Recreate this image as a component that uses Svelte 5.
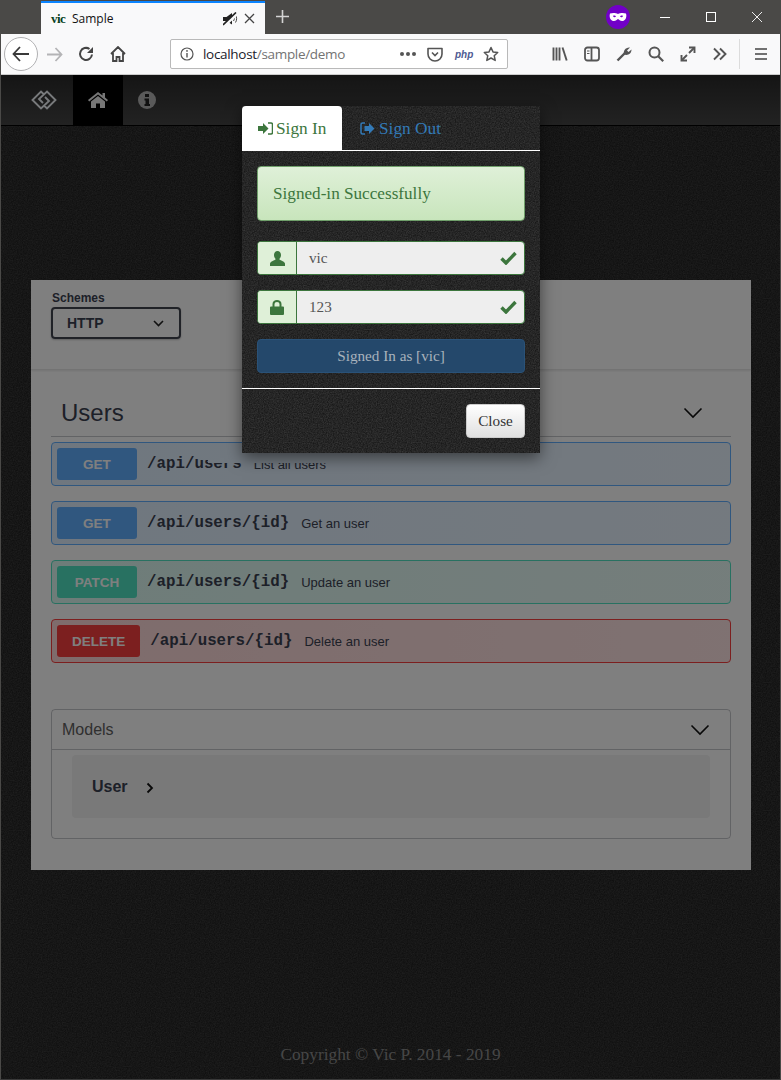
<script>
  const ops = [
    { m: 'GET', cls: 'get', path: '/api/users', desc: 'List all users', cut: true },
    { m: 'GET', cls: 'get', path: '/api/users/{id}', desc: 'Get an user' },
    { m: 'PATCH', cls: 'patch', path: '/api/users/{id}', desc: 'Update an user' },
    { m: 'DELETE', cls: 'delete', path: '/api/users/{id}', desc: 'Delete an user' }
  ];
</script>

<div class="window">
  <header class="tabbar">
    <div class="tab">
      <span class="favicon">vic</span>
      <span class="tabtitle">Sample</span>
      <svg class="mute" width="15" height="14" viewBox="0 0 15 14">
        <path d="M0 5h3.500L9 1v11.500L3.500 9H0z" fill="#222"/>
        <path d="M10.500 4.500c1 1.500 1 3 0 4.500M12.500 3c1.500 2.500 1.500 5 0 7.500" fill="none" stroke="#444" stroke-width="1"/>
        <path d="M1 14L14 1.500" stroke="#f9f9fa" stroke-width="3.200"/>
        <path d="M0 13L13 .5" stroke="#222" stroke-width="1.700"/>
      </svg>
      <svg class="tabclose" width="11" height="11" viewBox="0 0 11 11"><path d="M1 1l9 9M10 1l-9 9" stroke="#444" stroke-width="1.300"/></svg>
    </div>
    <svg class="newtab" width="13" height="13" viewBox="0 0 13 13"><path d="M6.500 0v13M0 6.500h13" stroke="#d4d4d4" stroke-width="1.600"/></svg>
    <span class="mask">
      <svg width="18" height="10" viewBox="0 0 18 10"><path fill-rule="evenodd" fill="#fff" d="M1 1.500C4 .5 7 1 9 2c2-1 5-1.500 8-.5 1 3 0 7-3.500 7.500C11.500 9.300 10 7.500 9 7c-1 .5-2.500 2.300-4.500 2C1 8.500 0 4.500 1 1.500zM4 4c1-.6 2.500-.6 3 .5C6 5.600 4.600 5.500 4 4zm10 0c-1-.6-2.500-.6-3 .5 1 1.100 2.400 1 3-.5z"/></svg>
    </span>
    <div class="winctl">
      <svg width="12" height="12" viewBox="0 0 12 12"><path d="M1 6.500h10" stroke="#fff" stroke-width="1"/></svg>
      <svg width="12" height="12" viewBox="0 0 12 12"><rect x="1.500" y="1.500" width="9" height="9" fill="none" stroke="#fff"/></svg>
      <svg width="12" height="12" viewBox="0 0 12 12"><path d="M1 1l10 10M11 1L1 11" stroke="#fff" stroke-width=".9"/></svg>
    </div>
  </header>

  <nav class="toolbar">
    <span class="back">
      <svg width="18" height="16" viewBox="0 0 18 16"><path d="M8 1L1.500 8 8 15M2 8h15" fill="none" stroke="#3a3a3a" stroke-width="1.800"/></svg>
    </span>
    <svg class="fwd" width="17" height="15" viewBox="0 0 17 15"><path d="M9.500 1l6 6.500-6 6.500M15 7.500H1" fill="none" stroke="#b4b4b6" stroke-width="1.800"/></svg>
    <svg class="reload" width="16" height="16" viewBox="0 0 16 16"><path d="M14 8.500A6 6 0 1 1 11.500 3" fill="none" stroke="#444" stroke-width="2"/><path d="M15 1v6H9z" fill="#444"/></svg>
    <svg class="thome" width="16" height="16" viewBox="0 0 16 16"><path d="M1 8l7-7 7 7M3 7v8h3.500v-4h3v4H13V7" fill="none" stroke="#444" stroke-width="1.800"/></svg>
    <div class="urlbar">
      <svg width="14" height="14" viewBox="0 0 14 14"><circle cx="7" cy="7" r="6" fill="none" stroke="#555" stroke-width="1.200"/><path d="M7 6v4.500" stroke="#555" stroke-width="1.400"/><circle cx="7" cy="3.900" r=".9" fill="#555"/></svg>
      <span class="url"><span class="host">localhost</span>/sample/demo</span>
      <span class="dots"><i></i><i></i><i></i></span>
      <svg class="pocket" width="16" height="15" viewBox="0 0 16 15"><path d="M1 1.500h14v5.500a7 7 0 0 1-14 0z" fill="none" stroke="#555" stroke-width="1.600" stroke-linejoin="round"/><path d="M5 5.500l3 3 3-3" fill="none" stroke="#555" stroke-width="1.600"/></svg>
      <span class="php">php</span>
      <svg class="star" width="16" height="16" viewBox="0 0 16 16"><path d="M8 1.500l2 4.400 4.700.6-3.500 3.200 1 4.700L8 12l-4.200 2.400 1-4.700L1.300 6.500 6 5.900z" fill="none" stroke="#555" stroke-width="1.500" stroke-linejoin="round"/></svg>
    </div>
    <div class="tools">
      <svg width="16" height="16" viewBox="0 0 16 16"><path d="M1.500 1.500v13M4.500 1.500v13M7.500 1.500v13" stroke="#555" stroke-width="1.900"/><path d="M10.500 1.500l4.200 13" stroke="#555" stroke-width="1.900"/></svg>
      <svg width="16" height="16" viewBox="0 0 16 16"><rect x="1" y="1.500" width="14" height="13" rx="2.500" fill="none" stroke="#555" stroke-width="1.800"/><path d="M7.500 2v12" stroke="#555" stroke-width="1.800"/><path d="M3 5h2.500M3 7.500h2.500" stroke="#555"/></svg>
      <svg width="16" height="16" viewBox="0 0 16 16"><path d="M1.500 14.500l7.500-7.500" stroke="#555" stroke-width="2.400"/><path d="M8 8.500C7 5 9.500 1 14 1.500L11 4.500l1.500 1.500L15.500 3.500C15.500 7.500 12 10 8 8.500z" fill="#555"/></svg>
      <svg width="16" height="16" viewBox="0 0 16 16"><circle cx="6.500" cy="6.500" r="5" fill="none" stroke="#555" stroke-width="2"/><path d="M10 10l5.200 5.200" stroke="#555" stroke-width="2.200"/></svg>
      <svg width="16" height="16" viewBox="0 0 16 16"><path d="M9 7l5-5M2 14l5-5" stroke="#555" stroke-width="1.900"/><path d="M9 1.500H14.500V7M7 14.500H1.500V9" fill="none" stroke="#555" stroke-width="1.900"/></svg>
      <svg width="16" height="16" viewBox="0 0 16 16"><path d="M2 2.500L7.500 8 2 13.500M8 2.500L13.500 8 8 13.500" fill="none" stroke="#555" stroke-width="1.900"/></svg>
    </div>
    <span class="tsep"></span>
    <svg class="burger" width="14" height="14" viewBox="0 0 14 14"><path d="M1 2h12M1 7h12M1 12h12" stroke="#444" stroke-width="1.700"/></svg>
  </nav>

  <main class="page">
    <div class="navbar">
      <a class="brand" href="#b" aria-label="logo">
        <svg width="26" height="20" viewBox="0 0 26 20"><path d="M12.500 4L10 1.500 1.500 10l8.500 8.500L18 11l-4-4M13.500 16l2.500 2.500 8.500-8.500L16 1.500 8 9l4 4" fill="none" stroke="#f0f4f8" stroke-width="1.900"/></svg>
      </a>
      <a class="navitem active" href="#h" aria-label="home">
        <svg width="20" height="16" viewBox="0 0 20 16"><path d="M10 0L0 8l1.200 1.400L10 2.500l8.800 6.900L20 8l-3-2.500V1h-2.500v2.400z" fill="#eee"/><path d="M3 9.500l7-5.500 7 5.500V16h-5v-4.500H8V16H3z" fill="#eee"/></svg>
      </a>
      <a class="navitem info" href="#i" aria-label="info">
        <svg width="18" height="18" viewBox="0 0 18 18"><circle cx="9" cy="9" r="9" fill="#b4b4b4"/><rect x="7" y="3" width="4" height="3" fill="#222"/><path d="M6.500 7.500H11V13h1v2H6.500v-2h1v-3.500h-1z" fill="#222"/></svg>
      </a>
    </div>

    <section class="card">
      <div class="schemes">
        <div class="schemelabel">Schemes</div>
        <div class="select">
          <span>HTTP</span>
          <svg width="11" height="7" viewBox="0 0 11 7"><path d="M1 1l4.500 4.500L10 1" fill="none" stroke="#222" stroke-width="1.600"/></svg>
        </div>
      </div>
      <div class="tagwrap">
        <div class="tag">
          <h2>Users</h2>
          <svg width="20" height="12" viewBox="0 0 20 12"><path d="M1.500 1.500L10 10l8.500-8.500" fill="none" stroke="#111" stroke-width="1.600"/></svg>
        </div>
        <div class="ops">
          {#each ops as op}
            <div class="op {op.cls}" class:cut={op.cut}>
              <span class="method">{op.m}</span>
              <span class="path">{op.path}</span>
              <span class="desc">{op.desc}</span>
            </div>
          {/each}
        </div>
        <div class="models">
          <div class="modelshead">
            <span>Models</span>
            <svg width="20" height="12" viewBox="0 0 20 12"><path d="M1.500 1.500L10 10l8.500-8.500" fill="none" stroke="#111" stroke-width="1.600"/></svg>
          </div>
          <div class="modelbox">
            <div class="modelinner">
              <span>User</span>
              <svg width="8" height="12" viewBox="0 0 8 12"><path d="M1.500 1.500L6 6l-4.500 4.500" fill="none" stroke="#111" stroke-width="1.800"/></svg>
            </div>
          </div>
        </div>
      </div>
    </section>

    <footer class="copy">Copyright © Vic P. 2014 - 2019</footer>

    <div class="backdrop"></div>

    <div class="modal">
      <div class="mtabs">
        <div class="mtab on">
          <svg width="15" height="13" viewBox="0 0 15 13"><path d="M0 4h5V1l5.500 5.500L5 12V9H0z" fill="#3c763d"/><path d="M10 1h3a1.500 1.500 0 0 1 1.500 1.500v8A1.500 1.500 0 0 1 13 12h-3" fill="none" stroke="#3c763d" stroke-width="1.500"/></svg>
          <span>Sign In</span>
        </div>
        <div class="mtab off">
          <svg width="15" height="13" viewBox="0 0 15 13"><path d="M5 1H2.500A1.500 1.500 0 0 0 1 2.500v8A1.500 1.500 0 0 0 2.500 12H5" fill="none" stroke="#337ab7" stroke-width="1.500"/><path d="M4.500 4H9V1l5.500 5.500L9 12V9H4.500z" fill="#337ab7"/></svg>
          <span>Sign Out</span>
        </div>
      </div>
      <div class="mbody">
        <div class="alert">Signed-in Successfully</div>
        <div class="field">
          <span class="addon">
            <svg width="15" height="15" viewBox="0 0 15 15"><path d="M7.500 0C5.300 0 4 1.800 4 4c0 1.700.7 3 1.700 4C5.500 9.500 1 9.500 0 12.500V15h15v-2.500c-1-3-5.500-3-5.700-4.500 1-1 1.700-2.300 1.700-4 0-2.200-1.300-4-3.500-4z" fill="#3c763d"/></svg>
          </span>
          <span class="value">vic</span>
          <svg class="check" width="17" height="14" viewBox="0 0 17 14"><path d="M1.500 7.500l4.500 4.500L15.500 2" fill="none" stroke="#3c763d" stroke-width="3.400"/></svg>
        </div>
        <div class="field">
          <span class="addon">
            <svg width="14" height="15" viewBox="0 0 14 15"><path d="M1 6.500h12a1 1 0 0 1 1 1V14a1 1 0 0 1-1 1H1a1 1 0 0 1-1-1V7.500a1 1 0 0 1 1-1z" fill="#3c763d"/><path d="M3.500 7V4a3.500 3 0 0 1 7 0v3" fill="none" stroke="#3c763d" stroke-width="2"/></svg>
          </span>
          <span class="value">123</span>
          <svg class="check" width="17" height="14" viewBox="0 0 17 14"><path d="M1.500 7.500l4.500 4.500L15.500 2" fill="none" stroke="#3c763d" stroke-width="3.400"/></svg>
        </div>
        <div class="signed">Signed In as [vic]</div>
      </div>
      <div class="mfoot">
        <div class="close">Close</div>
      </div>
    </div>
  </main>
</div>

<style>
  :global(body) { margin: 0; background: #1a1a1a; }
  a { text-decoration: none; }
  svg { display: block; flex: none; }

  .window {
    position: relative;
    width: 781px;
    height: 1080px;
    overflow: hidden;
    box-sizing: border-box;
    border-left: 1px solid #4a4947;
    border-right: 1px solid #4a4947;
    border-bottom: 1px solid #3a3a3a;
    display: flex;
    flex-direction: column;
    font-family: "Liberation Sans", sans-serif;
  }

  .tabbar {
    height: 34px;
    flex: none;
    background: #4a4947;
    display: flex;
    align-items: flex-end;
    padding-left: 40px;
    box-sizing: border-box;
  }
  .tab {
    width: 224px;
    height: 33px;
    box-sizing: border-box;
    background: #f9f9fa;
    border-top: 2px solid #0a84ff;
    display: flex;
    align-items: center;
    padding-left: 10px;
  }
  .favicon { font: bold 13px/1 "Liberation Serif", serif; color: #06401c; width: 21px; letter-spacing: -.6px; }
  .tabtitle { font: 12px "Open Sans", sans-serif; color: #111; width: 151px; }
  .tabclose { margin-left: 6px; }
  .newtab { margin: 0 0 11px 11px; }
  .mask {
    width: 24px; height: 24px;
    border-radius: 50%;
    background: #7100c7;
    display: flex; align-items: center; justify-content: center;
    margin: 0 0 5px 317px;
  }
  .winctl { display: flex; gap: 34px; margin: 0 0 11px 29px; }

  .toolbar {
    height: 41px;
    flex: none;
    background: #f9f9fa;
    display: flex;
    align-items: center;
    box-sizing: border-box;
    border-bottom: 1px solid #ccc;
    padding-left: 3px;
  }
  .back {
    width: 34px; height: 34px;
    box-sizing: border-box;
    border: 1px solid #b1b1b3;
    border-radius: 50%;
    background: #fff;
    display: flex; align-items: center; justify-content: center;
  }
  .fwd { margin-left: 8px; }
  .reload { margin-left: 15px; }
  .thome { margin-left: 16px; }
  .urlbar {
    width: 338px;
    height: 30px;
    box-sizing: border-box;
    margin-left: 44px;
    background: #fff;
    border: 1px solid #b9b9b9;
    border-radius: 2px;
    display: flex;
    align-items: center;
    padding-left: 9px;
  }
  .url { font: 13.500px "Open Sans", sans-serif; color: #737373; margin-left: 9px; width: 197px; white-space: nowrap; letter-spacing: -.31px; }
  .host { color: #1a1a2a; }
  .dots { display: flex; gap: 2px; width: 27px; }
  .dots i { width: 4px; height: 4px; border-radius: 50%; background: #555; }
  .php { font: italic bold 10px "Liberation Sans", sans-serif; color: #4f5b93; margin-left: 12px; width: 20px; }
  .star { margin-left: 8px; }
  .tools { display: flex; gap: 16px; margin-left: 44px; }
  .tsep { width: 1px; height: 30px; background: #dcdcdc; margin-left: 11px; }
  .burger { margin-left: 14px; }

  .page {
    position: relative;
    flex: 1;
    display: flex;
    flex-direction: column;
    background-color: #202020;
    background-image: url("data:image/svg+xml,%3Csvg xmlns='http://www.w3.org/2000/svg' width='128' height='128'%3E%3Cfilter id='n'%3E%3CfeTurbulence type='fractalNoise' baseFrequency='.8' numOctaves='2' stitchTiles='stitch'/%3E%3CfeColorMatrix values='0 0 0 0 1 0 0 0 0 1 0 0 0 0 1 .2 0 0 0 -.04'/%3E%3C/filter%3E%3Crect width='128' height='128' filter='url(%23n)'/%3E%3C/svg%3E");
  }
  .navbar {
    height: 51px;
    flex: none;
    box-sizing: border-box;
    border-bottom: 1px solid #000;
    background: linear-gradient(#2a2a2a, #454545);
    display: flex;
    padding-left: 30px;
  }
  .brand { width: 42px; display: flex; align-items: center; }
  .navitem { width: 50px; display: flex; align-items: center; justify-content: center; }
  .navitem.active { background: #000; }
  .navitem.info { padding-right: 2px; box-sizing: border-box; }

  .card {
    width: 720px;
    height: 590px;
    flex: none;
    margin: 154px 0 0 30px;
    background: #fff;
    color: #3b4151;
  }
  .schemes {
    height: 90px;
    box-sizing: border-box;
    padding: 12px 0 0 20px;
    border-bottom: 1px solid #e6e6e6;
    box-shadow: 0 1px 2px rgba(0,0,0,.1);
  }
  .schemelabel { font-size: 12px; font-weight: bold; line-height: 13px; margin-left: 1px; }
  .select {
    width: 130px;
    height: 32px;
    box-sizing: border-box;
    margin-top: 2px;
    border: 2px solid #41444e;
    border-radius: 4px;
    display: flex;
    align-items: center;
    justify-content: space-between;
    padding: 0 15px 0 14px;
    font-size: 14px;
    font-weight: bold;
    box-shadow: 0 1px 2px rgba(0,0,0,.25);
  }
  .tagwrap { padding: 20px 20px 0; }
  .tag {
    height: 47px;
    box-sizing: border-box;
    border-bottom: 1px solid rgba(59,65,81,.3);
    display: flex;
    align-items: center;
    justify-content: space-between;
    padding: 0 28px 0 10px;
  }
  h2 { margin: 0; font-size: 24px; font-weight: normal; }
  .ops { display: flex; flex-direction: column; gap: 15px; margin-top: 5px; }
  .op {
    height: 44px;
    box-sizing: border-box;
    border: 1px solid;
    border-radius: 4px;
    display: flex;
    align-items: center;
    padding-left: 5px;
  }
  .method {
    min-width: 80px;
    height: 32px;
    box-sizing: border-box;
    padding: 0 15px;
    border-radius: 3px;
    color: #fff;
    font-size: 13.500px;
    font-weight: bold;
    display: flex;
    align-items: center;
    justify-content: center;
  }
  .path { font: bold 15.800px "Liberation Mono", monospace; margin-left: 10px; }
  .desc { font-size: 13px; margin-left: 12px; padding-top: 1px; }
  .cut .path { clip-path: polygon(0 0, 53px 0, 53px 5px, 61px 5px, 61px 8px, 100% 8px, 100% 100%, 0 100%); }
  .cut .desc { clip-path: inset(7px 0 0 0); }
  .get { border-color: #61affe; background: linear-gradient(90deg, rgba(97,175,254,.2), rgba(97,175,254,.14)); }
  .get .method { background: #61affe; }
  .patch { border-color: #50e3c2; background: linear-gradient(90deg, rgba(80,227,194,.2), rgba(80,227,194,.12)); }
  .patch .method { background: #50e3c2; }
  .delete { border-color: #f93e3e; background: linear-gradient(90deg, rgba(249,62,62,.2), rgba(249,62,62,.14)); }
  .delete .method { background: #f93e3e; }

  .models {
    height: 130px;
    box-sizing: border-box;
    margin-top: 46px;
    border: 1px solid rgba(59,65,81,.3);
    border-radius: 4px;
  }
  .modelshead {
    height: 40px;
    box-sizing: border-box;
    border-bottom: 1px solid rgba(59,65,81,.3);
    display: flex;
    align-items: center;
    justify-content: space-between;
    padding: 0 20px 0 10px;
    font-size: 16px;
    color: #606060;
  }
  .modelbox { padding: 5px 20px; }
  .modelinner {
    height: 63px;
    border-radius: 4px;
    background: rgba(0,0,0,.05);
    display: flex;
    align-items: center;
    gap: 18px;
    padding-left: 20px;
    font-size: 16px;
    font-weight: bold;
  }
  .modelinner svg { margin-top: 3px; }

  .copy {
    margin-top: auto;
    padding-bottom: 13px;
    text-align: center;
    font: 17.340px/1.200 "Liberation Serif", serif;
    color: #8c8c8c;
  }

  .backdrop {
    position: absolute;
    inset: 0;
    background: rgba(0,0,0,.5);
  }

  .modal {
    position: absolute;
    top: 31px;
    left: 241px;
    width: 298px;
    height: 347px;
    background-color: #181818;
    background-image: url("data:image/svg+xml,%3Csvg xmlns='http://www.w3.org/2000/svg' width='128' height='128'%3E%3Cfilter id='n'%3E%3CfeTurbulence type='fractalNoise' baseFrequency='.8' numOctaves='2' stitchTiles='stitch'/%3E%3CfeColorMatrix values='0 0 0 0 1 0 0 0 0 1 0 0 0 0 1 .2 0 0 0 -.04'/%3E%3C/filter%3E%3Crect width='128' height='128' filter='url(%23n)'/%3E%3C/svg%3E");
    box-shadow: 0 5px 15px rgba(0,0,0,.5);
    font-family: "Liberation Serif", serif;
    display: flex;
    flex-direction: column;
  }
  .mtabs {
    height: 45px;
    flex: none;
    box-sizing: border-box;
    border-bottom: 1px solid #fff;
    display: flex;
    font-size: 17.300px;
  }
  .mtab { display: flex; align-items: center; gap: 3px; box-sizing: border-box; height: 44px; }
  .mtab span { padding-top: 1px; }
  .mtab.on { width: 100px; background: #fff; color: #3c763d; padding-left: 16px; border-radius: 4px 4px 0 0; }
  .mtab.off { color: #337ab7; padding-left: 18px; gap: 4px; }
  .mbody { padding: 15px 15px 0; flex: 1; box-sizing: border-box; display: flex; flex-direction: column; }
  .alert {
    height: 55px;
    flex: none;
    box-sizing: border-box;
    border: 1px solid #6f9f6a;
    border-radius: 4px;
    background: linear-gradient(#dff0d8, #c8e5bc);
    color: #3c763d;
    font-size: 17.170px;
    display: flex;
    align-items: center;
    padding-left: 15px;
    margin-bottom: 20px;
  }
  .field {
    height: 34px;
    flex: none;
    box-sizing: border-box;
    border: 1px solid #3c763d;
    border-radius: 4px;
    background: #eee;
    display: flex;
    align-items: center;
    margin-bottom: 15px;
    overflow: hidden;
  }
  .addon {
    width: 39px;
    height: 100%;
    box-sizing: border-box;
    border-right: 1px solid #3c763d;
    background: #dff0d8;
    display: flex;
    align-items: center;
    justify-content: center;
  }
  .value { flex: 1; padding-left: 12px; font-size: 15.200px; color: #555; }
  .check { margin-right: 7px; }
  .signed {
    height: 34px;
    flex: none;
    box-sizing: border-box;
    border: 1px solid #2a5278;
    border-radius: 4px;
    background: #24486b;
    color: #a8b2bc;
    font-size: 15.200px;
    display: flex;
    align-items: center;
    justify-content: center;
  }
  .mfoot {
    height: 65px;
    flex: none;
    box-sizing: border-box;
    border-top: 1px solid #fff;
    display: flex;
    justify-content: flex-end;
    padding: 15px 15px 0 0;
  }
  .close {
    width: 59px;
    height: 34px;
    box-sizing: border-box;
    border: 1px solid #ccc;
    border-radius: 4px;
    background: linear-gradient(#fff, #e0e0e0);
    color: #333;
    font-size: 15.200px;
    display: flex;
    align-items: center;
    justify-content: center;
  }
</style>
